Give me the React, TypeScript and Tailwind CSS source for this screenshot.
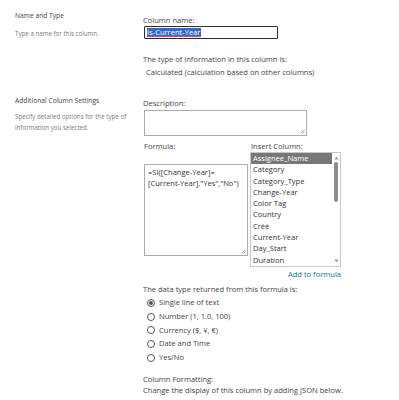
import React from "react";

const columns = [
  "Assignee_Name",
  "Category",
  "Category_Type",
  "Change-Year",
  "Color Tag",
  "Country",
  "Créé",
  "Current-Year",
  "Day_Start",
  "Duration",
];

const dataTypes = [
  "Single line of text",
  "Number (1, 1.0, 100)",
  "Currency ($, ¥, €)",
  "Date and Time",
  "Yes/No",
];

function Grip() {
  return (
    <svg className="absolute right-[1px] bottom-[1px]" width="6" height="6" viewBox="0 0 6 6">
      <path d="M5.5 1.5 L1.5 5.5 M5.5 3.5 L3.5 5.5" stroke="#8a8a8a" strokeWidth="0.8" />
    </svg>
  );
}

export default function App() {
  return (
    <div className="w-[399px] h-[400px] overflow-hidden bg-white flex items-start font-['Open_Sans',sans-serif] text-[#444]">
      {/* left column: section titles */}
      <div className="w-[143px] shrink-0 pl-[15px]">
        <div className="pt-[12px] text-[6.7px] leading-[8px] text-[#444]">Name and Type</div>
        <div className="mt-[10px] text-[6.2px] leading-[8px] text-[#7a7a7a]">Type a name for this column.</div>
        <div className="mt-[59px] text-[6.7px] leading-[8px] text-[#444]">Additional Column Settings</div>
        <div className="mt-[6px] w-[125px] text-[6.2px] leading-[11px] text-[#7a7a7a]">
          Specify detailed options for the type of information you selected.
        </div>
      </div>

      {/* right column: fields */}
      <div className="flex-1 text-[7.55px]">
        <div className="pt-[14px] leading-[12px]">Column name:</div>
        <div className="ml-[1px] w-[134px] h-[13px] border border-[#2e2e2e] rounded-[1px] flex items-center pl-[2px]">
          <span className="bg-[#3169c6] text-white leading-[9px] pr-[1px] underline decoration-[#e0407a] decoration-[0.6px] underline-offset-[1px]">
            Is-Current-Year
          </span>
        </div>

        <div className="mt-[14px] leading-[13px]">The type of information in this column is:</div>
        <div className="pl-[3px] leading-[13px]">Calculated (calculation based on other columns)</div>

        <div className="mt-[18px] leading-[12px]">Description:</div>
        <div className="relative mt-[1px] ml-[1px] w-[163px] h-[26px] border border-[#ababab]">
          <Grip />
        </div>

        <div className="mt-[4px] flex">
          <div className="w-[107px] shrink-0">
            <div className="pl-[1px] leading-[12px]">Formula:</div>
            <div className="relative mt-[12px] ml-[1px] w-[104px] h-[92px] border border-[#ababab] pl-[3px] pt-[2px] leading-[11px] text-[#333]">
              <div>=SI([Change-Year]=</div>
              <div>[Current-Year],"Yes","No")</div>
              <Grip />
            </div>
          </div>
          <div>
            <div className="pl-[1px] leading-[12px]">Insert Column:</div>
            <div className="w-[91px] h-[115px] border border-[#c8c8c8] flex">
              <div className="flex-1 flex flex-col text-[#333]">
                {columns.map((c, i) => (
                  <div
                    key={c}
                    className={
                      i === 0
                        ? "h-[11.3px] shrink-0 leading-[11.3px] pl-[2px] bg-[#777] text-white"
                        : "h-[11.3px] shrink-0 leading-[11.3px] pl-[2px]"
                    }
                  >
                    {c}
                  </div>
                ))}
              </div>
              <div className="w-[8px] flex flex-col items-center py-[3px]">
                <svg width="5" height="4" viewBox="0 0 5 4">
                  <path d="M2.5 0.5 L4.8 3.5 L0.2 3.5 Z" fill="#a3a3a3" />
                </svg>
                <div className="mt-[2px] w-[4px] h-[40px] rounded-full bg-[#8c8c8c]" />
                <div className="flex-1" />
                <svg width="5" height="4" viewBox="0 0 5 4">
                  <path d="M0.2 0.5 L4.8 0.5 L2.5 3.5 Z" fill="#a3a3a3" />
                </svg>
              </div>
            </div>
          </div>
        </div>

        <div className="w-[198px] mt-[1px] text-right leading-[12px] text-[#03787c]">Add to formula</div>

        <div className="mt-[3px] leading-[12px]">The data type returned from this formula is:</div>
        <div className="mt-[1px]">
          {dataTypes.map((t, i) => (
            <div key={t} className="h-[13.75px] flex items-center gap-[4px] pl-[4px]">
              <span className="w-[8px] h-[8px] rounded-full border border-[#555] flex items-center justify-center">
                {i === 0 && <span className="w-[4px] h-[4px] rounded-full bg-[#555]" />}
              </span>
              <span>{t}</span>
            </div>
          ))}
        </div>

        <div className="mt-[9px] leading-[11.5px]">Column Formatting:</div>
        <div className="leading-[11.5px]">Change the display of this column by adding JSON below.</div>
        <div className="leading-[11.5px]">Remove the text from the box to clear the custom formatting.</div>
      </div>
    </div>
  );
}
